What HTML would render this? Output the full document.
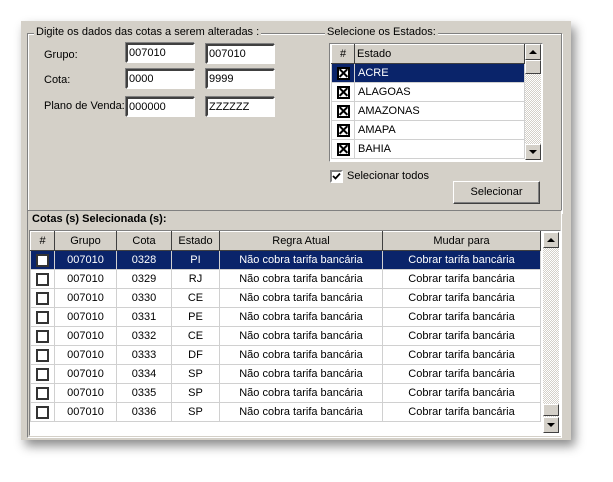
<!DOCTYPE html>
<html><head><style>
*{box-sizing:border-box;margin:0;padding:0}
body{width:613px;height:482px;background:#fff;position:relative;overflow:hidden;font-family:"Liberation Sans",sans-serif;font-size:11px;color:#000}
.a{position:absolute}
.panel{left:21px;top:21px;width:550px;height:419px;background:#d4d0c8;box-shadow:4px 6px 10px rgba(0,0,0,.45)}
.grp{border:1px solid #808080;box-shadow:1px 1px 0 #fff inset, 1px 1px 0 #fff}
.leg{background:#d4d0c8;padding:0 2px;white-space:nowrap}
.inp{background:#fff;border:2px solid;border-color:#404040 #fff #fff #404040;box-shadow:-1px -1px 0 #808080;height:20px;padding:1px 1px;font-size:11px;line-height:15px}
.cb{width:13px;height:13px;border:2px solid #333;background:#fff;position:absolute}
.x{width:13px;height:13px;border:2px solid #000;background:#fff;position:absolute}
.x:before,.x:after{content:"";position:absolute;left:-1px;top:3px;width:11px;height:2px;background:#000;transform:rotate(45deg)}
.x:after{transform:rotate(-45deg)}
.sb{background:#d4d0c8;border:1px solid;border-color:#fff #404040 #404040 #fff;position:absolute}
.track{background:repeating-conic-gradient(#fff 0 25%,#d4d0c8 0 50%) 0 0/2px 2px;position:absolute}
table{border-collapse:collapse;position:absolute;background:#fff}
td{height:19px;border:1px solid #d0d0d0;text-align:center;padding:0;white-space:nowrap}
th{height:19px;background:#d4d0c8;font-weight:normal;border:1px solid;border-color:#fff #404040 #404040 #fff;padding:0}
tr.sel td{background:#0a246a;color:#fff}
.tri-u{width:0;height:0;border-left:4px solid transparent;border-right:4px solid transparent;border-bottom:4px solid #000;position:absolute}
.tri-d{width:0;height:0;border-left:4px solid transparent;border-right:4px solid transparent;border-top:4px solid #000;position:absolute}
</style></head><body>
<div class="a panel"></div>
<div class="a grp" style="left:27px;top:33px;width:535px;height:180px;border-bottom:none"></div>
<div class="a leg" style="left:34px;top:26px">Digite os dados das cotas a serem alteradas :</div>
<div class="a" style="left:44px;top:49px">Grupo:</div>
<div class="a" style="left:44px;top:74px">Cota:</div>
<div class="a" style="left:44px;top:100px">Plano de Venda:</div>
<div class="a inp" style="left:126px;top:43px;width:69px">007010</div>
<div class="a inp" style="left:206px;top:44px;width:69px">007010</div>
<div class="a inp" style="left:126px;top:69px;width:69px">0000</div>
<div class="a inp" style="left:206px;top:69px;width:69px">9999</div>
<div class="a inp" style="left:126px;top:97px;width:69px">000000</div>
<div class="a inp" style="left:206px;top:97px;width:69px">ZZZZZZ</div>
<div class="a leg" style="left:325px;top:26px">Selecione os Estados:</div>
<div class="a" style="left:329px;top:43px;width:214px;height:119px;border:1px solid;border-color:#808080 #fff #fff #808080;background:#fff"></div>
<table style="left:331px;top:44px;width:194px">
<tr><th style="width:23px">#</th><th style="text-align:left;padding-left:2px">Estado</th></tr>
<tr class="sel"><td><div class="x" style="position:relative;margin:auto"></div></td><td style="text-align:left;padding-left:3px">ACRE</td></tr>
<tr><td><div class="x" style="position:relative;margin:auto"></div></td><td style="text-align:left;padding-left:3px">ALAGOAS</td></tr>
<tr><td><div class="x" style="position:relative;margin:auto"></div></td><td style="text-align:left;padding-left:3px">AMAZONAS</td></tr>
<tr><td><div class="x" style="position:relative;margin:auto"></div></td><td style="text-align:left;padding-left:3px">AMAPA</td></tr>
<tr><td><div class="x" style="position:relative;margin:auto"></div></td><td style="text-align:left;padding-left:3px">BAHIA</td></tr>
</table>
<div class="track" style="left:525px;top:44px;width:16px;height:116px"></div>
<div class="sb" style="left:525px;top:44px;width:16px;height:16px"><div class="tri-u" style="left:3px;top:5px"></div></div>
<div class="sb" style="left:525px;top:60px;width:16px;height:14px"></div>
<div class="sb" style="left:525px;top:144px;width:16px;height:16px"><div class="tri-d" style="left:3px;top:5px"></div></div>
<div class="a" style="left:330px;top:170px;width:13px;height:13px;border:2px solid;border-color:#808080 #fff #fff #808080;background:#fff"><svg width="9" height="9" style="position:absolute;left:0;top:0"><path d="M1 4 L3.5 6.5 L8 1.5" stroke="#000" stroke-width="1.8" fill="none"/></svg></div>
<div class="a" style="left:347px;top:170px">Selecionar todos</div>
<div class="a" style="left:453px;top:181px;width:87px;height:23px;border:1px solid;border-color:#fff #404040 #404040 #fff;box-shadow:inset -1px -1px 0 #808080;text-align:center;line-height:21px">Selecionar</div>
<div class="a" style="left:27px;top:210px;width:535px;height:228px;border:1px solid;border-color:#808080 #fff #fff #808080;background:#d4d0c8"></div>
<div class="a" style="left:32px;top:213px;font-weight:bold">Cotas (s) Selecionada (s):</div>
<div class="a" style="left:29px;top:230px;width:532px;height:206px;background:#fff;border:1px solid;border-color:#808080 #fff #fff #808080"></div>
<table style="left:30px;top:231px;width:511px">
<tr><th style="width:24px">#</th><th style="width:62px">Grupo</th><th style="width:55px">Cota</th><th style="width:48px">Estado</th><th style="width:163px">Regra Atual</th><th>Mudar para</th></tr>
<tr class="sel"><td><div class="cb" style="position:relative;margin:auto"></div></td><td>007010</td><td>0328</td><td>PI</td><td>Não cobra tarifa bancária</td><td>Cobrar tarifa bancária</td></tr>
<tr><td><div class="cb" style="position:relative;margin:auto"></div></td><td>007010</td><td>0329</td><td>RJ</td><td>Não cobra tarifa bancária</td><td>Cobrar tarifa bancária</td></tr>
<tr><td><div class="cb" style="position:relative;margin:auto"></div></td><td>007010</td><td>0330</td><td>CE</td><td>Não cobra tarifa bancária</td><td>Cobrar tarifa bancária</td></tr>
<tr><td><div class="cb" style="position:relative;margin:auto"></div></td><td>007010</td><td>0331</td><td>PE</td><td>Não cobra tarifa bancária</td><td>Cobrar tarifa bancária</td></tr>
<tr><td><div class="cb" style="position:relative;margin:auto"></div></td><td>007010</td><td>0332</td><td>CE</td><td>Não cobra tarifa bancária</td><td>Cobrar tarifa bancária</td></tr>
<tr><td><div class="cb" style="position:relative;margin:auto"></div></td><td>007010</td><td>0333</td><td>DF</td><td>Não cobra tarifa bancária</td><td>Cobrar tarifa bancária</td></tr>
<tr><td><div class="cb" style="position:relative;margin:auto"></div></td><td>007010</td><td>0334</td><td>SP</td><td>Não cobra tarifa bancária</td><td>Cobrar tarifa bancária</td></tr>
<tr><td><div class="cb" style="position:relative;margin:auto"></div></td><td>007010</td><td>0335</td><td>SP</td><td>Não cobra tarifa bancária</td><td>Cobrar tarifa bancária</td></tr>
<tr><td><div class="cb" style="position:relative;margin:auto"></div></td><td>007010</td><td>0336</td><td>SP</td><td>Não cobra tarifa bancária</td><td>Cobrar tarifa bancária</td></tr>
</table>
<div class="track" style="left:543px;top:232px;width:16px;height:201px"></div>
<div class="sb" style="left:543px;top:232px;width:16px;height:16px"><div class="tri-u" style="left:3px;top:5px"></div></div>
<div class="sb" style="left:543px;top:404px;width:16px;height:12px"></div>
<div class="sb" style="left:543px;top:417px;width:16px;height:16px"><div class="tri-d" style="left:3px;top:5px"></div></div>
</body></html>
